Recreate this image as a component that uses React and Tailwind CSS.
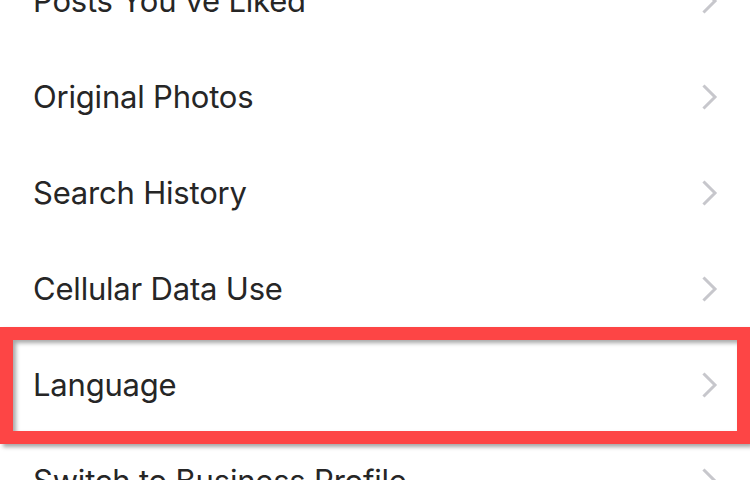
const items = [
  "Posts You've Liked",
  "Original Photos",
  "Search History",
  "Cellular Data Use",
  "Language",
  "Switch to Business Profile",
];

function Chevron() {
  return (
    <svg width="16" height="26" viewBox="0 0 16 26" className="shrink-0">
      <path d="M2.5 2.5 L13 13 L2.5 23.5" fill="none" stroke="#c7c7cc" strokeWidth="3" strokeLinecap="square" />
    </svg>
  );
}

export default function App() {
  return (
    <div className="w-[750px] h-[480px] overflow-hidden bg-white font-['Inter',sans-serif] text-[#262626]">
      <div className="-mt-[47px] flex flex-col">
        {items.map((label) => (
          <div key={label} className="relative h-[96px] flex items-center justify-between pl-[33px] pr-[32px]">
            <span className="text-[31px] leading-none tracking-[-0.2px] pb-[2px]">{label}</span>
            <Chevron />
            {label === "Language" && (
              <div className="absolute left-0 right-0 -top-[10px] h-[117px] border-[13px] border-[#fd4545] shadow-[3px_3px_4px_rgba(0,0,0,0.35),inset_3px_3px_4px_rgba(0,0,0,0.35)]" />
            )}
          </div>
        ))}
      </div>
    </div>
  );
}
